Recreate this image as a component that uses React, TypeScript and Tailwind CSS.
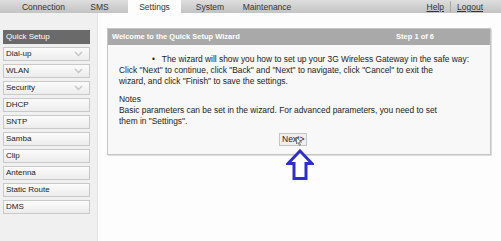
import React from 'react';

const menuItems: { label: string; expandable?: boolean }[] = [
  { label: 'Dial-up', expandable: true },
  { label: 'WLAN', expandable: true },
  { label: 'Security', expandable: true },
  { label: 'DHCP' },
  { label: 'SNTP' },
  { label: 'Samba' },
  { label: 'Clip' },
  { label: 'Antenna' },
  { label: 'Static Route' },
  { label: 'DMS' },
];

const tabs: { label: string; cls: string }[] = [
  { label: 'Connection', cls: 'w-[71px]' },
  { label: 'SMS', cls: 'w-[41px]' },
  { label: 'Settings', cls: 'w-[53px] ml-[8px] bg-[#fdfdfd]' },
  { label: 'System', cls: 'w-[58px]' },
  { label: 'Maintenance', cls: 'w-[56px]' },
];

const Chevron = () => (
  <svg width="9" height="6" viewBox="0 0 9 6" className="mr-[6px]">
    <path d="M1 1 L4.5 4.5 L8 1" fill="none" stroke="#c4c4c4" strokeWidth="1.3" />
  </svg>
);

const App: React.FC = () => {
  return (
    <div className="relative w-[501px] h-[241px] overflow-hidden bg-[#fdfdfd] font-['Liberation_Sans',Arial,sans-serif] text-[#333]">
      {/* top nav */}
      <div className="flex h-[13px] items-stretch bg-gradient-to-b from-[#dedede] to-[#c3c3c3] text-[8.5px] leading-[14px]">
        <div className="flex pl-[8px]">
          {tabs.map(tab => (
            <div key={tab.label} className={`text-center ${tab.cls}`}>
              {tab.label}
            </div>
          ))}
        </div>
        <div className="ml-auto flex items-center pr-[18px]">
          <a className="underline text-[#333]">Help</a>
          <span className="mx-[6px] h-[11px] w-px bg-[#a8a8a8]" />
          <a className="underline text-[#333]">Logout</a>
        </div>
      </div>

      <div className="flex h-[228px]">
        {/* sidebar */}
        <div className="w-[98px] shrink-0 bg-[#f0f0f0] border-r border-[#e4e4e4] pl-[3px] pr-[7px] pt-[17px] flex flex-col gap-[3px]">
          <div className="h-[14px] bg-[#6a6a6a] text-white text-[8px] leading-[14px] pl-[3px]">Quick Setup</div>
          {menuItems.map(item => (
            <div
              key={item.label}
              className="h-[14px] flex items-center justify-between border border-[#c9c9c9] bg-gradient-to-b from-[#fbfbfb] to-[#ececec] text-[8px] text-[#222] pl-[2px]"
            >
              <span>{item.label}</span>
              {item.expandable && <Chevron />}
            </div>
          ))}
        </div>

        {/* main */}
        <div className="flex-1 min-w-0 pl-[9px] pt-[15px] pr-[10px]">
          <div className="border border-[#c6c6c6] bg-[#f8f8f8] shadow-[1px_1px_0_#dcdcdc]">
            <div className="h-[16px] bg-[#a9a9a9] flex items-center justify-between px-[4px] text-white font-bold text-[7.5px]">
              <span>Welcome to the Quick Setup Wizard</span>
              <span className="mr-[52px]">Step 1 of 6</span>
            </div>
            <div className="pl-[11px] pr-[20px] pt-[9px] pb-[8px] text-[8.4px] leading-[11px] text-[#222] whitespace-nowrap">
              <p className="pl-[33px]">•&nbsp;&nbsp; The wizard will show you how to set up your 3G Wireless Gateway in the safe way:</p>
              <p>Click "Next" to continue, click "Back" and "Next" to navigate, click "Cancel" to exit the</p>
              <p>wizard, and click "Finish" to save the settings.</p>
              <p className="mt-[7px]">Notes</p>
              <p>Basic parameters can be set in the wizard. For advanced parameters, you need to set</p>
              <p>them in "Settings".</p>
              <div className="flex pl-[160px] mt-[6px]">
                <button className="h-[13px] px-[2px] border border-[#c4c4c4] bg-[#efefef] text-[8.5px] leading-[11px] text-[#222]">
                  Next&gt;
                </button>
              </div>
            </div>
          </div>
        </div>
      </div>

      {/* mouse cursor over the button */}
      <svg className="absolute left-[296px] top-[137px]" width="6" height="9" viewBox="0 0 6 9">
        <path d="M0.5 0.5 L0.5 7 L2 5.5 L3.5 8.5 L4.5 8 L3 5 L5.5 5 Z" fill="#fff" stroke="#555" strokeWidth="0.7" />
      </svg>

      {/* annotation arrow */}
      <svg className="absolute left-[286px] top-[149px]" width="28" height="32" viewBox="0 0 28 32">
        <path d="M14 2 L26 14.5 L20 14.5 L20 29.5 L8 29.5 L8 14.5 L2 14.5 Z" fill="#fff" stroke="#2f2fc6" strokeWidth="3" strokeLinejoin="miter" />
      </svg>
    </div>
  );
};

export default App;
